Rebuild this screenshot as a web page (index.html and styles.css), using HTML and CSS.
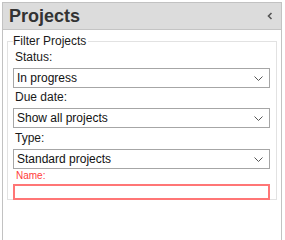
FILE: index.html
```html
<!DOCTYPE html>
<html lang="en">
<head>
    <meta charset="UTF-8">
    <meta name="viewport" content="width=device-width, initial-scale=1.0">
    <title>Projects</title>
    <link rel="stylesheet" href="styles.css">
</head>
<body>
    <div class="panel">
        <div class="panel-header">
            <span class="panel-title">Projects</span>
            <svg class="collapse" width="6" height="8" viewBox="0 0 6 8">
                <polyline points="4.5,1 1.5,4 4.5,7" fill="none" stroke="#555" stroke-width="1.6"/>
            </svg>
        </div>

        <fieldset class="filters">
            <legend>Filter Projects</legend>

            <label class="field-label">Status:</label>
            <div class="select">
                <span>In progress</span>
                <svg width="9" height="5" viewBox="0 0 9 5"><polyline points="0.5,0.5 4.5,4.5 8.5,0.5" fill="none" stroke="#555" stroke-width="1"/></svg>
            </div>

            <label class="field-label">Due date:</label>
            <div class="select">
                <span>Show all projects</span>
                <svg width="9" height="5" viewBox="0 0 9 5"><polyline points="0.5,0.5 4.5,4.5 8.5,0.5" fill="none" stroke="#555" stroke-width="1"/></svg>
            </div>

            <label class="field-label tall">Type:</label>
            <div class="select">
                <span>Standard projects</span>
                <svg width="9" height="5" viewBox="0 0 9 5"><polyline points="0.5,0.5 4.5,4.5 8.5,0.5" fill="none" stroke="#555" stroke-width="1"/></svg>
            </div>

            <label class="field-label error" for="nameInput">Name:</label>
            <input class="text-input error" id="nameInput" type="text">
        </fieldset>
    </div>
</body>
</html>
```

FILE: styles.css
```css
body {
    margin: 0;
    background: #ffffff;
    font-family: 'Liberation Sans', Arial, sans-serif;
    color: #1a1a1a;
}

.panel {
    margin: 2px 3px 0 2px;
    min-height: calc(100vh - 2px);
    border: 1px solid #c2c2c2;
    border-bottom: none;
    box-sizing: border-box;
    display: flex;
    flex-direction: column;
}

.panel-header {
    height: 26px;
    line-height: 26px;
    background: #dcdcdc;
    border-bottom: 1px solid #c4c4c4;
    padding: 0 8px 0 6px;
    display: flex;
    align-items: center;
    justify-content: space-between;
}

.panel-title {
    font-size: 18px;
    font-weight: bold;
    color: #333333;
}

.collapse {
    margin-top: -1px;
}

/* 过滤区域 */
.filters {
    margin: 4px 4px 0 4px;
    padding: 0 6px 0 5px;
    border: 1px solid #e2e2e2;
    min-width: 0;
}

.filters legend {
    padding: 0 2px 0 0;
    font-size: 12px;
    line-height: 14px;
}

.field-label {
    display: block;
    font-size: 12px;
    line-height: 15px;
    padding: 2px 0 3px 2px;
}

.field-label.tall {
    padding-top: 3px;
}

.field-label.error {
    font-size: 10px;
    line-height: 14px;
    padding: 0 0 1px 3px;
    color: #ff3b3b;
}

.select {
    height: 20px;
    box-sizing: border-box;
    border: 1px solid #a6a6a6;
    padding: 0 6px 0 3px;
    display: flex;
    align-items: center;
    justify-content: space-between;
    font-size: 12px;
    color: #111111;
}

.text-input {
    display: block;
    width: 100%;
    height: 16px;
    margin: 0 0 -1px 0;
    box-sizing: border-box;
    border: 2px solid #ff7676;
    padding: 0;
    outline: none;
}
```
